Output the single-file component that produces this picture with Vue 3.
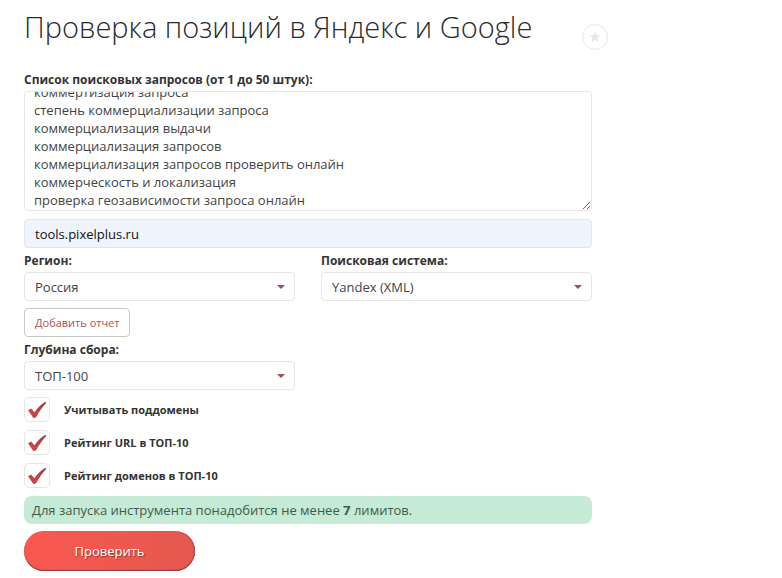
<template>
  <main class="page">
    <header class="page-header">
      <h1>Проверка позиций в Яндекс и Google</h1>
      <button type="button" class="favorite" aria-label="Добавить в избранное">
        <svg width="12" height="12" viewBox="0 0 12 12">
          <path
            d="M6 1.2 7.4 4.3 10.8 4.7 8.3 7 9 10.4 6 8.8 3 10.4 3.7 7 1.2 4.7 4.6 4.3Z"
            fill="#e6e7e9"
            stroke="#e6e7e9"
            stroke-width=".6"
            stroke-linejoin="round"
          />
        </svg>
      </button>
    </header>

    <form class="form" @submit.prevent="check">
      <label class="label" for="queries">Список поисковых запросов (от 1 до 50 штук):</label>
      <textarea id="queries" ref="queriesBox" v-model="queries" class="queries" spellcheck="false"></textarea>

      <input v-model="site" class="control site" type="text" aria-label="Сайт" />

      <div class="row">
        <div class="field">
          <label class="label" for="region">Регион:</label>
          <div class="select">
            <select id="region" v-model="region" class="control">
              <option>Россия</option>
            </select>
          </div>
        </div>
        <div class="field">
          <label class="label" for="engine">Поисковая система:</label>
          <div class="select">
            <select id="engine" v-model="engine" class="control">
              <option>Yandex (XML)</option>
            </select>
          </div>
        </div>
      </div>

      <button type="button" class="add-btn">Добавить отчет</button>

      <div class="row">
        <div class="field">
          <label class="label" for="depth">Глубина сбора:</label>
          <div class="select">
            <select id="depth" v-model="depth" class="control">
              <option>ТОП-100</option>
            </select>
          </div>
        </div>
      </div>

      <div class="checks">
        <label v-for="item in options" :key="item.text" class="check">
          <input v-model="item.checked" type="checkbox" />
          <span class="box">
            <svg v-if="item.checked" width="20" height="20" viewBox="0 0 20 20">
              <defs>
                <linearGradient id="tick" x1="0" y1="1" x2="1" y2="0">
                  <stop offset="0.4" stop-color="#cb4443" />
                  <stop offset="1" stop-color="#7d4248" />
                </linearGradient>
              </defs>
              <path d="M1 10.2 4.2 8.4 7.4 12.2C10.6 7.8 14.2 4.2 18.6 1.8L19.2 3C15 7.4 12.2 11.6 9 17.4L6.4 18Z" fill="url(#tick)" />
            </svg>
          </span>
          <span>{{ item.text }}</span>
        </label>
      </div>

      <p class="notice">Для запуска инструмента понадобится не менее <b>{{ limits }}</b> лимитов.</p>

      <button type="submit" class="submit-btn">Проверить</button>
    </form>
  </main>
</template>

<script setup>
import { ref, onMounted } from 'vue'

const queries = ref([
  'коммертизация запроса',
  'степень коммерциализации запроса',
  'коммерциализация выдачи',
  'коммерциализация запросов',
  'коммерциализация запросов проверить онлайн',
  'коммерческость и локализация',
  'проверка геозависимости запроса онлайн'
].join('\n'))
const site = ref('tools.pixelplus.ru')
const region = ref('Россия')
const engine = ref('Yandex (XML)')
const depth = ref('ТОП-100')
const limits = ref(7)
const options = ref([
  { text: 'Учитывать поддомены', checked: true },
  { text: 'Рейтинг URL в ТОП-10', checked: true },
  { text: 'Рейтинг доменов в ТОП-10', checked: true }
])

const queriesBox = ref(null)

onMounted(() => {
  queriesBox.value.scrollTop = 15
})

const check = () => {
  console.log('Проверить:', site.value)
}
</script>

<style>
body {
  margin: 0;
  background: #fff;
}
</style>

<style scoped>
.page {
  padding: 4px 24px 7px;
  font-family: 'Open Sans', 'Noto Sans', sans-serif;
  font-size: 13px;
  color: #444;
}

.page *,
.page {
  box-sizing: border-box;
}

.page-header {
  display: flex;
  justify-content: space-between;
  align-items: flex-end;
  max-width: 584px;
  margin-bottom: 20px;
}

h1 {
  margin: 0;
  font-size: 29px;
  font-weight: 300;
  line-height: 46px;
  color: #2b2b2b;
}

.favorite {
  display: flex;
  align-items: center;
  justify-content: center;
  flex: none;
  width: 26px;
  height: 26px;
  padding: 0;
  border: 1px solid #e6e7e9;
  border-radius: 50%;
  background: #fff;
}

.form {
  display: flex;
  flex-direction: column;
  max-width: 568px;
}

.label {
  display: block;
  font-size: 12px;
  font-weight: 700;
  line-height: 20px;
  color: #333;
  margin-bottom: 1px;
}

.queries {
  display: block;
  width: 100%;
  height: 120px;
  margin: 0 0 8px;
  padding: 6px 9px;
  border: 1px solid #e6e6e6;
  border-radius: 4px;
  font: inherit;
  line-height: 18px;
  color: #444;
  outline: none;
  resize: vertical;
  scrollbar-width: none;
}

.control {
  display: block;
  width: 100%;
  height: 29px;
  padding: 0 10px;
  border: 1px solid #e6e6e6;
  border-radius: 4px;
  background: #fff;
  font: inherit;
  color: #444;
  outline: none;
  appearance: none;
}

.site {
  margin-bottom: 3px;
  background: #f0f4fe;
  border-color: #e1e6ef;
  color: #111;
}

.row {
  display: grid;
  grid-template-columns: 1fr 1fr;
  gap: 26px;
}

.select {
  position: relative;
}

.select::after {
  content: '';
  position: absolute;
  top: 13px;
  right: 10px;
  border: 4px solid transparent;
  border-top-color: #a84a52;
  border-bottom: 0;
  pointer-events: none;
}

.add-btn {
  align-self: flex-start;
  height: 29px;
  margin: 7px 0 3px;
  padding: 0 10px;
  border: 1px solid #c8c8c8;
  border-radius: 4px;
  background: #fff;
  font: inherit;
  font-size: 11px;
  color: #b05057;
}

.checks {
  display: flex;
  flex-direction: column;
  gap: 8px;
  margin: 7px 0 8px;
}

.check {
  display: flex;
  align-items: center;
  gap: 14px;
  font-size: 11px;
  font-weight: 700;
  color: #333;
}

.check input {
  position: absolute;
  opacity: 0;
}

.box {
  display: flex;
  align-items: center;
  justify-content: center;
  width: 26px;
  height: 25px;
  border: 1px solid #e6e6e6;
  border-radius: 5px;
}

.notice {
  margin: 0 0 7px;
  padding: 0 8px;
  border-radius: 8px;
  background: #c5ebd7;
  line-height: 28px;
  color: #3d5a4a;
}

.submit-btn {
  align-self: flex-start;
  width: 171px;
  height: 40px;
  border: 0;
  border-radius: 20px;
  background: linear-gradient(90deg, #fb584f, #e4584f);
  box-shadow: inset 0 -1px 1px #8c3a3a, inset -1px 0 1px #b04a48;
  font: inherit;
  color: #fff;
  text-shadow: 1px 1px 1px #8c3a3a;
}
</style>
